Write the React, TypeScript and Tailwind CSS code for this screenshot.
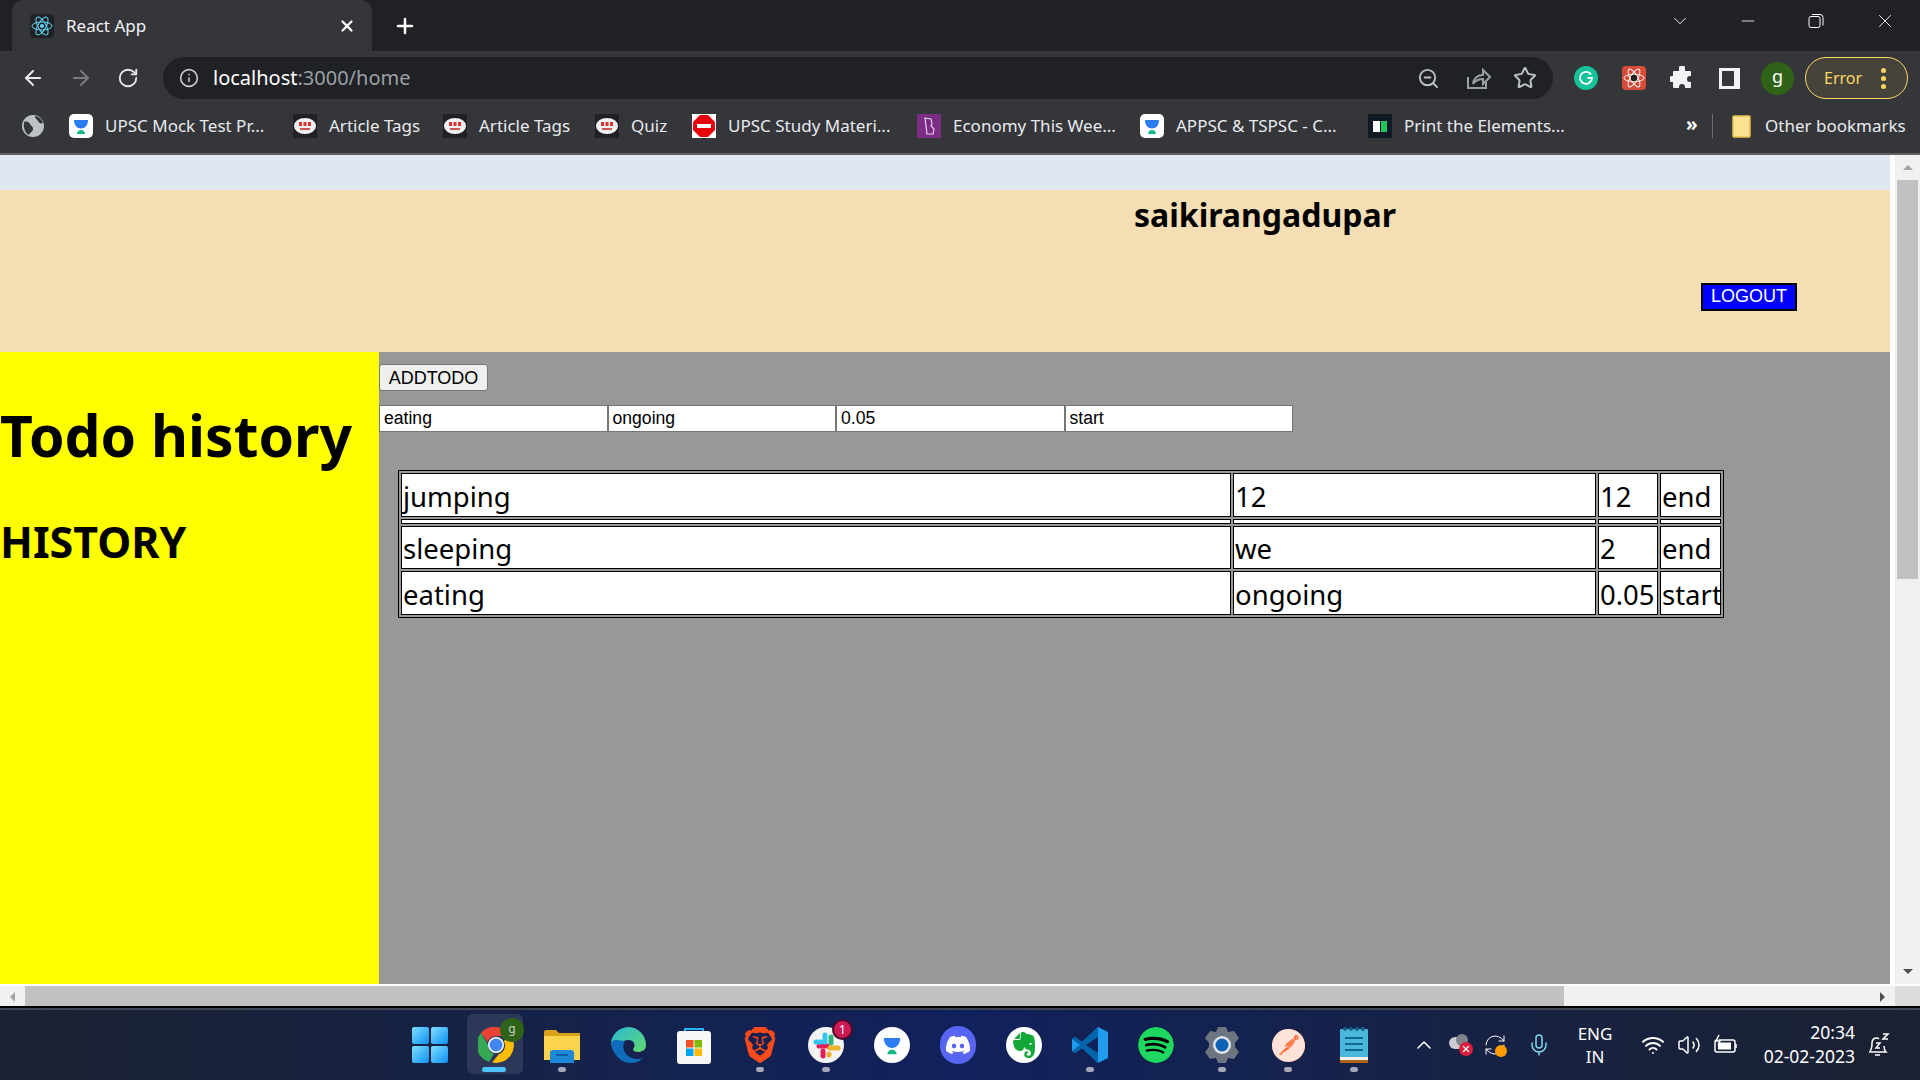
import React from "react";
import { ArrowLeft, ArrowRight, RotateCw, RefreshCw, Info, ZoomOut, Star, ChevronDown, ChevronUp, Minus, X, Plus, Mic, Wifi, Volume2 } from "lucide-react";
import { SiBrave, SiDiscord, SiEvernote, SiSpotify, SiPostman } from "react-icons/si";

const UI = "font-['Noto_Sans','Open_Sans',sans-serif]";

function ReactLogo() {
  return (
    <svg viewBox="-12 -12 24 24" className="w-6 h-6 bg-[#202124] rounded-sm" fill="none" stroke="#61dafb" strokeWidth="1">
      <circle r="2" fill="#61dafb" stroke="none" />
      <ellipse rx="10" ry="4" />
      <ellipse rx="10" ry="4" transform="rotate(60)" />
      <ellipse rx="10" ry="4" transform="rotate(120)" />
    </svg>
  );
}

function Bird({ size = 24, white = true }: { size?: number; white?: boolean }) {
  return (
    <svg viewBox="0 0 24 24" width={size} height={size}>
      {white && <rect width="24" height="24" rx="5" fill="#fff" />}
      <path d="M5 6h14c0 5-3 8.500-7 8.500S5 11 5 6z" fill="#2a7cf0" />
      <path d="M8 20c0-2.500 2-4 4-4s4 1.500 4 4z" fill="#12b886" />
    </svg>
  );
}

function StudyIcon() {
  return (
    <svg viewBox="0 0 24 24" width="24" height="24" className="bg-[#202124]">
      <ellipse cx="12" cy="12" rx="11" ry="8" fill="#f1f1f1" />
      <rect x="6" y="8" width="3" height="4" fill="#d33" />
      <rect x="10.500" y="8" width="3" height="4" fill="#d33" />
      <rect x="15" y="8" width="3" height="4" fill="#d33" />
      <rect x="7" y="14" width="10" height="2" fill="#c55" />
    </svg>
  );
}

function Bookmark({ icon, label, width }: { icon: React.ReactNode; label: string; width: number }) {
  return (
    <div className="flex items-center shrink-0" style={{ width }}>
      <div className="w-6 h-6 flex items-center justify-center shrink-0">{icon}</div>
      <span className="ml-3 text-[17px] text-[#e8eaed] whitespace-nowrap">{label}</span>
    </div>
  );
}

function BrowserChrome() {
  return (
    <div className={`${UI} shrink-0`}>
      <div className="h-[51px] bg-[#202124] flex items-end pl-3 text-[#e8eaed]">
        <div className="w-[360px] h-[51px] bg-[#35363a] rounded-t-xl flex items-center pl-[18px] pr-4">
          <ReactLogo />
          <span className="ml-3 text-[17px] text-[#f1f3f4]">React App</span>
          <X size={18} strokeWidth={3} className="ml-auto text-white" />
        </div>
        <div className="h-[51px] flex items-center ml-[21px] grow">
          <Plus size={24} strokeWidth={2.5} className="text-white" />
          <div className="ml-auto flex items-center text-white -mt-[9px]">
            <ChevronDown size={22} strokeWidth={1} className="mr-[47px]" />
            <Minus size={20} strokeWidth={1} className="mr-[50px]" />
            <svg width="16" height="16" viewBox="0 0 16 16" fill="none" stroke="white" className="mr-[50px]">
              <rect x="1" y="3.500" width="11" height="11" rx="2" />
              <path d="M4 1.500h8a3 3 0 0 1 3 3v8" />
            </svg>
            <X size={22} strokeWidth={1} className="mr-6" />
          </div>
        </div>
      </div>

      <div className="h-[48px] bg-[#35363a] flex items-end">
        <div className="h-[48px] flex items-center w-[163px] pl-[21px] pt-[5px] gap-[24px]">
          <ArrowLeft size={24} className="text-[#e8eaed]" />
          <ArrowRight size={24} className="text-[#7a7b7e]" />
          <RotateCw size={22} className="text-[#e8eaed]" />
        </div>
        <div className="w-[1390px] h-[42px] bg-[#202124] rounded-full flex items-center pl-[8px] pr-[16px]">
          <Info size={20} className="ml-[8px] text-[#c4c7c5]" />
          <span className="ml-[14px] text-[20px] text-white">
            localhost<span className="text-[#9aa0a6]">:3000/home</span>
          </span>
          <ZoomOut size={23} className="ml-auto text-[#bdc1c6]" />
          <svg width="26" height="24" viewBox="0 0 26 24" fill="none" stroke="#9aa0a6" strokeWidth="2" className="ml-[25px]">
            <path d="M3 11v11h18v-6M3 22" />
            <path d="M8 18c1-6 5-9 10-9V4l7 7-7 7v-5c-4 0-7 1-10 5z" />
          </svg>
          <Star size={24} className="ml-[22px] text-[#bdc1c6]" />
        </div>
        <div className="h-[48px] flex items-center grow pt-[6px]">
          <div className="ml-[21px] w-6 h-6 rounded-full bg-[#15c39a] flex items-center justify-center">
            <svg width="16" height="16" viewBox="0 0 16 16" fill="none" stroke="white" strokeWidth="1.800"><path d="M13 4.500A6 6 0 1 0 14 8H9.500" /></svg>
          </div>
          <div className="ml-6 w-6 h-6 bg-[#d94a38] rounded-sm flex items-center justify-center">
            <svg viewBox="-12 -12 24 24" width="22" height="22" fill="none" stroke="white" strokeWidth="1"><ellipse rx="11" ry="4" /><ellipse rx="11" ry="4" transform="rotate(60)" /><ellipse rx="11" ry="4" transform="rotate(120)" /><circle r="3.500" fill="#222" stroke="none" /></svg>
          </div>
          <svg viewBox="0 0 24 24" width="24" height="24" fill="#f1f3f4" className="ml-6">
            <path d="M9 2a3 3 0 0 1 6 0l0 3h5a1 1 0 0 1 1 1v4h-1a3 3 0 0 0 0 6h1v5a1 1 0 0 1-1 1h-5v-1a3 3 0 0 0-6 0v1H4a1 1 0 0 1-1-1v-5H2a3 3 0 0 1 0-6h1V6a1 1 0 0 1 1-1h5z" />
          </svg>
          <div className="ml-[25px] w-[21px] h-[21px] bg-[#f1f3f4] flex items-center pl-[3px]">
            <div className="w-[12px] h-[15px] bg-[#35363a]" />
          </div>
          <div className="ml-[21px] w-[33px] h-[33px] rounded-full bg-[#2f6418] flex items-center justify-center text-[18px] text-white pb-[3px]">g</div>
          <div className="ml-[11px] w-[103px] h-[42px] rounded-full border border-[#fdd663] bg-[#45433b] flex items-center pl-[18px] text-[#fdd663] text-[16px]">
            Error
            <div className="ml-[19px] flex flex-col gap-[3px]">
              <div className="w-[5px] h-[5px] rounded-full bg-[#fdd663]" />
              <div className="w-[5px] h-[5px] rounded-full bg-[#fdd663]" />
              <div className="w-[5px] h-[5px] rounded-full bg-[#fdd663]" />
            </div>
          </div>
        </div>
      </div>

      <div className="h-[54px] bg-[#35363a] flex items-center pl-[21px]">
        <svg width="24" height="24" viewBox="0 0 24 24" className="mr-[24px] shrink-0">
          <circle cx="12" cy="12" r="11" fill="#bdc1c6" />
          <path d="M3 8c3-1 5 0 6 2s3 2 3 5-3 3-4 6c-3-1-6-6-5-13zM14 2c3 0 7 3 8 7-2 1-4 0-5-2s-3-2-3-5z" fill="#35363a" />
        </svg>
        <Bookmark icon={<Bird />} label="UPSC Mock Test Pr..." width={224} />
        <Bookmark icon={<StudyIcon />} label="Article Tags" width={150} />
        <Bookmark icon={<StudyIcon />} label="Article Tags" width={152} />
        <Bookmark icon={<StudyIcon />} label="Quiz" width={97} />
        <Bookmark
          icon={
            <svg viewBox="0 0 24 24" width="24" height="24" className="bg-white">
              <path d="M8 1h8l7 7v8l-7 7H8l-7-7V8z" fill="#e8000d" />
              <rect x="5" y="10" width="14" height="4" fill="#fff" />
            </svg>
          }
          label="UPSC Study Materi..."
          width={225}
        />
        <Bookmark
          icon={
            <svg viewBox="0 0 24 24" width="24" height="24" className="bg-[#7b2d86]">
              <path d="M8 4l6 1 1 5-1 2 3 3-1 5-6 0z" fill="none" stroke="#e9cfee" strokeWidth="1.200" />
            </svg>
          }
          label="Economy This Wee..."
          width={223}
        />
        <Bookmark icon={<Bird />} label="APPSC & TSPSC - C..." width={228} />
        <Bookmark
          icon={
            <div className="w-6 h-6 bg-[#0f1a24] flex items-center justify-center gap-[1px]">
              <div className="w-[7px] h-[11px] bg-white" />
              <div className="w-[6px] h-[11px] bg-[#21c55d]" />
            </div>
          }
          label="Print the Elements..."
          width={318}
        />
        <span className="text-[19px] text-white font-bold leading-none w-[26px] shrink-0 pb-[3px]">»</span>
        <div className="w-px h-6 bg-[#6b6c70] shrink-0 mr-[19px]" />
        <svg width="20" height="24" viewBox="0 0 20 24" className="shrink-0">
          <rect x="1" y="2" width="17" height="21" rx="1" fill="#fde293" />
          <rect x="1" y="2" width="17" height="21" rx="1" fill="none" stroke="#e4c24e" strokeWidth="1.500" />
        </svg>
        <span className="ml-[13px] text-[17px] text-[#e8eaed] whitespace-nowrap">Other bookmarks</span>
      </div>
      <div className="h-[2px] bg-[#5f6064]" />
    </div>
  );
}

const rows = [
  ["jumping", "12", "12", "end"],
  ["", "", "", ""],
  ["sleeping", "we", "2", "end"],
  ["eating", "ongoing", "0.05", "start"],
];

function Page() {
  return (
    <div className="flex-1 min-w-0 flex flex-col overflow-hidden">
      <div className="h-[35px] bg-[#dfe7f1] shrink-0" />
      <div className="h-[162px] bg-[#f5deb3] shrink-0 relative">
        <h1 className={`${UI} absolute left-[1134px] top-[1px] text-[32px] font-bold text-black whitespace-nowrap`}>saikirangadupar</h1>
        <button className="absolute left-[1701px] top-[93px] w-[96px] h-[28px] border-2 border-black bg-[#0000ff] text-white text-[18px] font-['Liberation_Sans',sans-serif] leading-none pb-[2px] flex items-center justify-center">
          LOGOUT
        </button>
      </div>
      <div className="flex-1 flex min-h-0">
        <aside className={`${UI} w-[379px] shrink-0 bg-[#ffff00] text-black font-bold`}>
          <h1 className="text-[57px] leading-none whitespace-nowrap mt-[55px]">Todo history</h1>
          <h2 className="text-[43px] leading-none whitespace-nowrap mt-[56px]">HISTORY</h2>
        </aside>
        <main className="flex-1 bg-[#989898] pt-3 min-w-0">
          <button className="block w-[109px] h-[27px] bg-[#efefef] border border-[#767676] rounded-[3px] text-[18px] leading-none pt-px text-black font-['Liberation_Sans',sans-serif]">
            ADDTODO
          </button>
          <div className="flex mt-[14px] font-['Liberation_Sans',sans-serif]">
            {["eating", "ongoing", "0.05", "start"].map((v) => (
              <input
                key={v}
                readOnly
                value={v}
                className="w-[228.500px] h-[27px] bg-white border border-[#767676] text-[17.600px] pl-[4px] text-black outline-none"
              />
            ))}
          </div>
          <table className={`${UI} ml-[19px] mt-[38px] border border-black border-separate [border-spacing:2px] table-fixed w-[1324px] text-[27.500px] text-black`}>
            <colgroup>
              <col className="w-[830px]" />
              <col className="w-[363px]" />
              <col className="w-[60px]" />
              <col className="w-[61px]" />
            </colgroup>
            <tbody>
              {rows.map((r, i) => (
                <tr key={i}>
                  {r.map((c, j) => (
                    <td
                      key={j}
                      className={`border border-black bg-white px-[1px] whitespace-nowrap align-bottom ${
                        i === 1 ? "h-[5px] p-0 text-[1px] leading-none" : `leading-[36px] pb-[1px] ${i === 2 ? "h-[43px]" : "h-[44px]"}`
                      }`}
                    >
                      {c}
                    </td>
                  ))}
                </tr>
              ))}
            </tbody>
          </table>
        </main>
      </div>
    </div>
  );
}

function VScrollbar() {
  return (
    <div className="w-[30px] shrink-0 bg-white pl-[5px]">
      <div className="h-full bg-[#f1f1f1] flex flex-col items-center">
        <div className="h-[25px] flex items-center justify-center w-full">
          <div className="w-0 h-0 border-x-[5px] border-x-transparent border-b-[5px] border-b-[#a3a3a3]" />
        </div>
        <div className="w-[21px] h-[399px] bg-[#c1c1c1]" />
        <div className="mt-auto h-[25px] flex items-center justify-center w-full">
          <div className="w-0 h-0 border-x-[5px] border-x-transparent border-t-[5px] border-t-[#505050]" />
        </div>
      </div>
    </div>
  );
}

function HScrollbar() {
  return (
    <div className="h-[24px] shrink-0 bg-black flex flex-col">
      <div className="h-[22px] flex bg-[#f1f1f1] pt-[2px] border-t-2 border-white box-border">
        <div className="w-[25px] flex items-center justify-center">
          <div className="w-0 h-0 border-y-[5px] border-y-transparent border-r-[5px] border-r-[#a3a3a3]" />
        </div>
        <div className="w-[1539px] bg-[#c1c1c1] -mt-[2px]" />
        <div className="flex-1 flex items-center justify-end pr-[10px]">
          <div className="w-0 h-0 border-y-[5px] border-y-transparent border-l-[5px] border-l-[#505050]" />
        </div>
        <div className="w-[25px] bg-[#dcdcdc] -mt-[2px]" />
      </div>
    </div>
  );
}

function TBIcon({ children, dot, active }: { children: React.ReactNode; dot?: boolean; active?: boolean }) {
  return (
    <div className="w-[66px] h-[70px] flex items-center justify-center relative shrink-0">
      {active && <div className="absolute left-[4px] top-[4px] w-[56px] h-[60px] rounded-md bg-white/10" />}
      <div className="relative">{children}</div>
      {dot && <div className="absolute left-[29px] top-[57px] w-[8px] h-[5px] rounded-full bg-[#a4a8b8]" />}
      {active && <div className="absolute left-[19px] top-[57px] w-[24px] h-[5px] rounded-full bg-[#4cc2ff]" />}
    </div>
  );
}

function Taskbar() {
  return (
    <div className={`${UI} h-[72px] shrink-0 border-t-2 border-[#3e4454] bg-gradient-to-r from-[#1b2130] via-[#11215c] to-[#1b2130] flex text-white pl-[397px]`}>
      <TBIcon>
        <svg width="36" height="36" viewBox="0 0 36 36">
          <defs>
            <linearGradient id="w" x1="0" y1="0" x2="1" y2="1"><stop offset="0" stopColor="#7fe0ff" /><stop offset="1" stopColor="#0c8ff0" /></linearGradient>
          </defs>
          <rect x="0" y="0" width="17" height="17" rx="2" fill="url(#w)" />
          <rect x="19" y="0" width="17" height="17" rx="2" fill="url(#w)" />
          <rect x="0" y="19" width="17" height="17" rx="2" fill="url(#w)" />
          <rect x="19" y="19" width="17" height="17" rx="2" fill="url(#w)" />
        </svg>
      </TBIcon>
      <TBIcon active>
        <svg width="36" height="36" viewBox="0 0 36 36">
          <path d="M18 0a18 18 0 0 1 15.600 9H18a9 9 0 0 0-8.500 6L3 6A18 18 0 0 1 18 0z" fill="#ea4335" />
          <path d="M3 6l7 12a9 9 0 0 0 6 8.800L11 35A18 18 0 0 1 3 6z" fill="#34a853" />
          <path d="M33.600 9A18 18 0 0 1 14 35.500L21 27a9 9 0 0 0 4.800-13z" fill="#fbbc04" />
          <circle cx="18" cy="18" r="8" fill="#fff" />
          <circle cx="18" cy="18" r="6.500" fill="#4285f4" />
        </svg>
        <div className="absolute -right-[10px] -top-[9px] w-6 h-6 rounded-full bg-[#2f6418] flex items-center justify-center text-[12px] text-[#ccc] pb-[2px]">g</div>
      </TBIcon>
      <TBIcon dot>
        <svg width="36" height="36" viewBox="0 0 36 36">
          <path d="M0 5a2 2 0 0 1 2-2h10l3 3h21v26a1 1 0 0 1-1 1H1a1 1 0 0 1-1-1z" fill="#d9a21b" />
          <path d="M0 9h36v24H0z" fill="#fcd34d" />
          <path d="M6 36V26a3 3 0 0 1 3-3h18a3 3 0 0 1 3 3v10z" fill="#1e88d9" />
          <rect x="12" y="27" width="12" height="2" fill="#0e5a9e" />
        </svg>
      </TBIcon>
      <TBIcon>
        <svg width="36" height="36" viewBox="0 0 36 36">
          <defs>
            <linearGradient id="e" x1="0" y1="0" x2="1" y2="1"><stop offset="0" stopColor="#2bb9d9" /><stop offset="1" stopColor="#64d86a" /></linearGradient>
          </defs>
          <path d="M18 0a18 18 0 0 1 18 18c0 5-4 7-8 7-3 0-5-1-5-3 3-3 2-9-5-9-6 0-10 6-7 13-5-2-10-7-10-10A18 18 0 0 1 18 0z" fill="url(#e)" />
          <path d="M1 16c1 10 9 20 20 20 5 0 9-2 12-5-5 2-12 1-16-3-4-4-5-10-2-14-5 0-12-3-14 2z" fill="#0f6cbd" />
        </svg>
      </TBIcon>
      <TBIcon>
        <svg width="36" height="38" viewBox="0 0 36 38">
          <path d="M9 7V3h18v4" fill="none" stroke="#2bb3f3" strokeWidth="2" />
          <rect x="1" y="5" width="34" height="33" rx="3" fill="#f8f8f8" />
          <rect x="10" y="14" width="7.500" height="7.500" fill="#f25022" />
          <rect x="18.500" y="14" width="7.500" height="7.500" fill="#7fba00" />
          <rect x="10" y="22.500" width="7.500" height="7.500" fill="#00a4ef" />
          <rect x="18.500" y="22.500" width="7.500" height="7.500" fill="#ffb900" />
        </svg>
      </TBIcon>
      <TBIcon dot>
        <SiBrave size={36} className="text-[#fb4a1a]" />
      </TBIcon>
      <TBIcon dot>
        <div className="w-[36px] h-[36px] rounded-full bg-[#f4f4f4] relative overflow-visible">
          <svg width="36" height="36" viewBox="0 0 36 36" strokeWidth="5" strokeLinecap="round">
            <path d="M11 19h8" stroke="#e01e5a" /><path d="M15 24v5" stroke="#e01e5a" />
            <path d="M17 8v7" stroke="#36c5f0" /><path d="M8 15h5" stroke="#36c5f0" />
            <path d="M23 10v6" stroke="#2eb67d" />
            <path d="M22 21h8" stroke="#ecb22e" /><path d="M21 27v1" stroke="#ecb22e" />
          </svg>
          <div className="absolute -right-[9px] -top-[8px] w-[21px] h-[21px] rounded-full bg-[#cc1a55] border-2 border-[#4a0b2a] flex items-center justify-center text-[12px] leading-none text-white">1</div>
        </div>
      </TBIcon>
      <TBIcon>
        <div className="w-[36px] h-[36px] rounded-full bg-white flex items-center justify-center"><Bird size={28} white={false} /></div>
      </TBIcon>
      <TBIcon>
        <div className="w-[36px] h-[38px] rounded-full bg-[#5865f2] flex items-center justify-center"><SiDiscord size={24} className="text-white" /></div>
      </TBIcon>
      <TBIcon>
        <div className="w-[36px] h-[36px] rounded-full bg-white flex items-center justify-center"><SiEvernote size={26} className="text-[#14a83b]" /></div>
      </TBIcon>
      <TBIcon dot>
        <svg width="36" height="36" viewBox="0 0 36 36">
          <path d="M26 0l10 5v26l-10 5-16-15-7 5-3-2v-12l3-2 7 5z" fill="#1f9cf0" />
          <path d="M26 0v36L10 21l-7 5-3-2 8-6-8-6 3-2 7 5z" fill="#0065a9" />
          <path d="M26 10L14 18l12 8z" fill="#11215c" />
        </svg>
      </TBIcon>
      <TBIcon>
        <SiSpotify size={36} className="text-[#1ed760] bg-black rounded-full" />
      </TBIcon>
      <TBIcon dot>
        <svg width="36" height="36" viewBox="0 0 36 36">
          <path d="M14 0h8l2 5 6-1 5 7-4 5v4l4 5-5 7-6-1-2 5h-8l-2-5-6 1-5-7 4-5v-4L1 11l5-7 6 1z" fill="#6d7680" />
          <circle cx="18" cy="18" r="9" fill="#dfe3e8" />
          <circle cx="18" cy="18" r="6.500" fill="#0f62b5" />
        </svg>
      </TBIcon>
      <TBIcon dot>
        <div className="w-[33px] h-[33px] rounded-full bg-[#ff6c37] flex items-center justify-center"><SiPostman size={33} className="text-[#ffe3d8]" /></div>
      </TBIcon>
      <TBIcon dot>
        <svg width="28" height="36" viewBox="0 0 28 36">
          <rect x="0" y="2" width="28" height="30" rx="1" fill="#4cb7dc" />
          <rect x="0" y="30" width="28" height="3" fill="#f4f4f4" />
          <rect x="0" y="33" width="28" height="3" fill="#b3621a" />
          <rect x="5" y="10" width="18" height="2" fill="#15668c" />
          <rect x="5" y="16" width="18" height="2" fill="#15668c" />
          <rect x="5" y="22" width="18" height="2" fill="#15668c" />
          <circle cx="5" cy="2" r="2" fill="#15668c" /><circle cx="11" cy="2" r="2" fill="#15668c" /><circle cx="17" cy="2" r="2" fill="#15668c" /><circle cx="23" cy="2" r="2" fill="#15668c" />
        </svg>
      </TBIcon>

      <div className="flex items-center pl-[25px] grow">
        <ChevronUp size={24} strokeWidth={1.500} className="text-white" />
        <div className="ml-[12px] relative w-6 h-6 shrink-0">
          <div className="absolute left-[1px] top-[4px] w-[16px] h-[12px] rounded-full bg-[#c9ccd0]" />
          <div className="absolute left-[8px] top-[1px] w-[12px] h-[12px] rounded-full bg-[#7f838a]" />
          <div className="absolute left-[11px] top-[9px] w-[14px] h-[14px] rounded-full bg-[#d81e3a] flex items-center justify-center"><X size={10} strokeWidth={3} /></div>
        </div>
        <div className="ml-[11px] relative w-6 h-6 shrink-0">
          <RefreshCw size={24} strokeWidth={1} className="text-white" />
          <div className="absolute left-[12px] top-[12px] w-[12px] h-[12px] rounded-full bg-[#ff9d00]" />
        </div>
        <Mic size={24} strokeWidth={1.500} className="ml-[20px] text-[#7fd6ef]" />
        <div className="ml-[12px] w-[64px] text-center text-[17px] leading-[23px] shrink-0">
          <div>ENG</div>
          <div>IN</div>
        </div>
        <Wifi size={24} className="ml-[14px] text-white" />
        <Volume2 size={24} strokeWidth={1.500} className="ml-[12px] text-white" />
        <svg width="24" height="24" viewBox="0 0 24 24" fill="none" stroke="white" strokeWidth="1.500" className="ml-[13px]">
          <rect x="1" y="7" width="20" height="12" rx="2" />
          <rect x="4" y="9.500" width="13" height="7" fill="white" stroke="none" />
          <path d="M22 11v4" />
          <path d="M5 2L2 8h4l-2 4" fill="#1b2130" />
        </svg>
        <div className="ml-[2px] w-[115px] text-right text-[17.500px] leading-[24px] shrink-0 -mt-[2px]">
          <div>20:34</div>
          <div>02-02-2023</div>
        </div>
        <svg width="24" height="26" viewBox="0 0 24 26" fill="none" stroke="white" strokeWidth="1.500" className="ml-[12px]">
          <path d="M3 19c2-2 2-4 2-8 0-3 2-5 5-5 1 0 1 0 2 1M2 20h17c-2-2-2-3-2-6M8 23h5" />
          <path d="M9 11h4l-4 5h4M16 2h5l-5 5h5" />
        </svg>
      </div>
    </div>
  );
}

export default function App() {
  return (
    <div className="w-[1920px] h-[1080px] flex flex-col overflow-hidden bg-black">
      <BrowserChrome />
      <div className="flex-1 flex min-h-0">
        <Page />
        <VScrollbar />
      </div>
      <HScrollbar />
      <Taskbar />
    </div>
  );
}
